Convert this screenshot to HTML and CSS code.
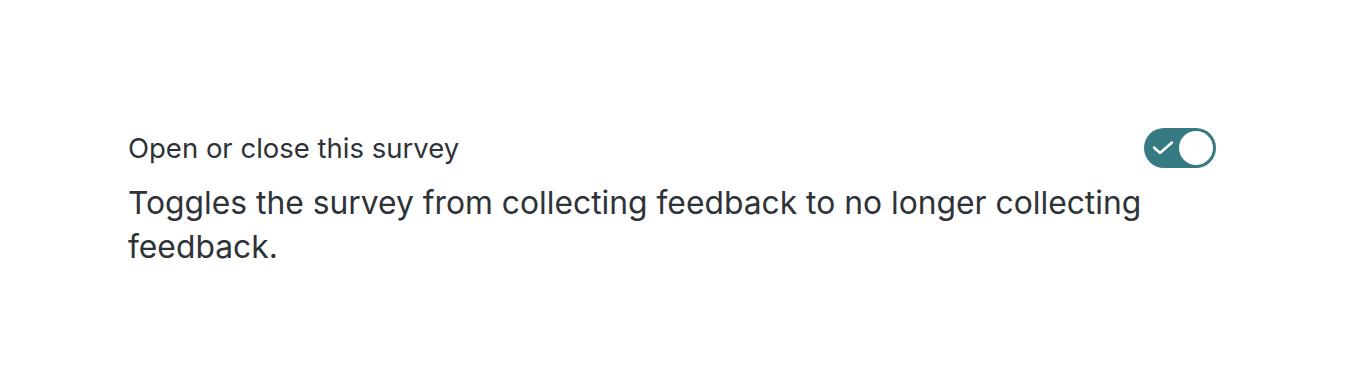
FILE: index.html
```html
<!DOCTYPE html>
<html lang="en">
<head>
    <meta charset="UTF-8">
    <meta name="viewport" content="width=device-width, initial-scale=1.0">
    <title>Survey settings</title>
    <link rel="stylesheet" href="styles.css">
</head>
<body>

    <div class="setting">
        <div class="setting-row">
            <div class="setting-label">Open or close this survey</div>
            <label class="toggle">
                <input type="checkbox" checked>
                <span class="toggle-track">
                    <svg class="toggle-check" width="22" height="16" viewBox="0 0 22 16">
                        <path d="M2 7.5 L8 13 L20 2.5" fill="none" stroke="#fff" stroke-width="2.4" stroke-linecap="round" stroke-linejoin="round"/>
                    </svg>
                    <span class="toggle-knob"></span>
                </span>
            </label>
        </div>
        <p class="setting-desc">Toggles the survey from collecting feedback to no longer collecting feedback.</p>
    </div>

</body>
</html>
```

FILE: styles.css
```css
body {
    font-family: Inter, "Open Sans", sans-serif;
    background-color: #fff;
    color: #2e3338;
    margin: 0;
}
.setting {
    padding: 128px 130px 0 128px;
}
.setting-row {
    display: flex;
    align-items: flex-start;
    justify-content: space-between;
}
.setting-label {
    font-size: 27.5px;
    line-height: 40px;
}
.setting-desc {
    font-size: 31.8px;
    line-height: 44px;
    margin: 13px 0 0 0;
}
.toggle {
    position: relative;
    display: inline-block;
    flex-shrink: 0;
    cursor: pointer;
}
.toggle input {
    position: absolute;
    opacity: 0;
    width: 0;
    height: 0;
}
.toggle-track {
    display: flex;
    align-items: center;
    justify-content: space-between;
    width: 72px;
    height: 40px;
    box-sizing: border-box;
    padding: 0 3px 0 8px;
    background-color: #367a83;
    border-radius: 20px;
}
.toggle-knob {
    width: 34px;
    height: 34px;
    border-radius: 50%;
    background-color: #fff;
}
```
